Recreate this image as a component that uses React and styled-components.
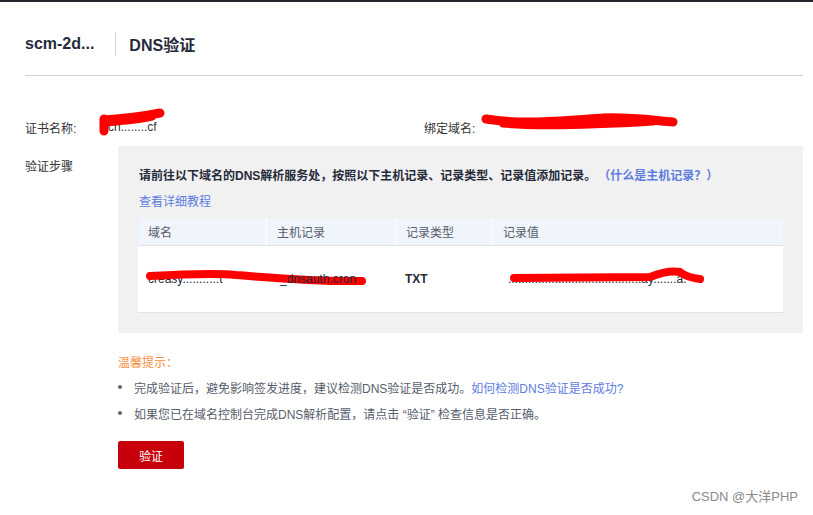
import React from 'react'
import styled, { createGlobalStyle } from 'styled-components'

const GlobalStyle = createGlobalStyle`
  html, body {
    margin: 0;
    padding: 0;
    background: #fff;
  }
  body {
    font-family: "Liberation Sans", "Noto Sans CJK SC", Arial, sans-serif;
    font-size: 12px;
    color: #575d6c;
  }
`;

const Page = styled.div`
  position: relative;
  width: 813px;
  height: 515px;
  border-top: 2px solid #24272e;
  box-sizing: border-box;
  padding: 0 10px 0 25px;
  overflow: hidden;
`;

const Header = styled.div`
  display: flex;
  align-items: center;
  height: 74px;
  border-bottom: 1px solid #cfcfcf;
  box-sizing: border-box;
  padding-top: 10px;
`;

const Title = styled.div`
  font-size: 16px;
  font-weight: bold;
  color: #252b3a;
`;

const Divider = styled.div`
  width: 1px;
  height: 24px;
  background: #d4d4d4;
  margin: 0 13px 0 21px;
`;

const InfoRow = styled.div`
  display: flex;
  align-items: center;
  margin-top: 39px;
  height: 24px;
`;

const Field = styled.div`
  display: flex;
  align-items: center;
  width: ${p => p.$w ? p.$w + 'px' : 'auto'};
`;

const Label = styled.div`
  width: ${p => p.$w}px;
  flex-shrink: 0;
  color: #333;
`;

const Redacted = styled.div`
  position: relative;
  width: ${p => p.$w}px;
  height: 20px;
  color: #333;
  line-height: 20px;
`;

const Scribble = styled.svg`
  position: absolute;
  left: ${p => p.$x || 0}px;
  top: ${p => p.$y || 0}px;
  overflow: visible;
`;

const StepRow = styled.div`
  display: flex;
  margin-top: 7px;
`;

const StepLabel = styled(Label)`
  padding-top: 11px;
`;

const StepBox = styled.div`
  flex: 1;
  background: #f1f1f1;
  padding: 22px 20px 20px 20px;
`;

const Instruction = styled.div`
  font-weight: bold;
  color: #252b3a;
  line-height: 16px;
  padding-left: 1px;
`;

const Link = styled.a`
  color: #5e7ce0;
  text-decoration: none;
  cursor: pointer;
  font-weight: ${p => p.$bold ? 'bold' : 'normal'};
  margin-left: ${p => p.$gap || 0}px;
`;

const Tutorial = styled.div`
  margin-top: 10px;
  line-height: 16px;
  padding-left: 1px;
`;

const Table = styled.div`
  margin-top: 8px;
  background: #fff;
  border-bottom: 1px solid #dfe1e6;
`;

const Cols = styled.div`
  display: grid;
  grid-template-columns: 128px 129px 97px 1fr;
  height: ${p => p.$h}px;
  align-items: center;
  background: ${p => p.$head ? '#f0f4fb' : '#fff'};
  border-bottom: ${p => p.$head ? '1px solid #dfe1e6' : 'none'};
`;

const Cell = styled.div`
  position: relative;
  padding-left: 10px;
  height: 100%;
  display: flex;
  align-items: center;
  color: ${p => p.$head ? '#575d6c' : '#252b3a'};
  font-weight: ${p => p.$strong ? 'bold' : 'normal'};
  border-left: ${p => p.$head && p.$sep ? '1px solid #fff' : 'none'};
`;

const TipTitle = styled.div`
  margin-top: 22px;
  margin-left: 93px;
  color: #f7913d;
  line-height: 16px;
`;

const TipList = styled.ul`
  list-style: none;
  margin: 3px 0 0 93px;
  padding: 0;
`;

const TipItem = styled.li`
  display: flex;
  align-items: center;
  height: 26px;
  color: #575d6c;
  &::before {
    content: '';
    width: 4px;
    height: 4px;
    border-radius: 50%;
    background: #666;
    margin-right: 12px;
  }
`;

const Button = styled.button`
  display: block;
  margin: 15px 0 0 93px;
  width: 66px;
  height: 28px;
  border: none;
  border-radius: 2px;
  background: #c7000b;
  color: #fff;
  font-family: "Liberation Sans", "Noto Sans CJK SC", sans-serif;
  font-size: 12px;
  cursor: pointer;
`;

const Watermark = styled.div`
  position: absolute;
  right: 15px;
  bottom: 10px;
  font-size: 13px;
  color: #8a8a8a;
  font-family: "Liberation Sans", "Noto Sans CJK SC", sans-serif;
`;

const Red = ({ d, w = 8 }) => (
  <path d={d} stroke="#ff0000" strokeWidth={w} strokeLinecap="round" strokeLinejoin="round" fill="none" />
);

export default function App() {
  return (
    <>
      <GlobalStyle />
      <Page>
        <Header>
          <Title>scm-2d...</Title>
          <Divider />
          <Title>DNS验证</Title>
        </Header>

        <InfoRow>
          <Field $w={399}>
            <Label $w={75}>证书名称:</Label>
            <Redacted $w={80}>
              <span style={{ marginLeft: 8 }}>cn........cf</span>
              <Scribble $x={0} $y={-6} width="66" height="26">
                <Red d="M4 8 L4 20 M4 9 C20 8 40 6 60 2" w={9} />
                <Red d="M6 12 C25 10 40 9 52 6" w={7} />
              </Scribble>
            </Redacted>
          </Field>
          <Field>
            <Label $w={59}>绑定域名:</Label>
            <Redacted $w={200}>
              <Scribble $x={0} $y={-2} width="195" height="16">
                <Red d="M3 4 C40 10 80 6 120 3 C150 2 175 6 190 7" w={9} />
                <Red d="M20 9 C60 13 120 10 170 7" w={7} />
              </Scribble>
            </Redacted>
          </Field>
        </InfoRow>

        <StepRow>
          <StepLabel $w={93}>验证步骤</StepLabel>
          <StepBox>
            <Instruction>
              请前往以下域名的DNS解析服务处，按照以下主机记录、记录类型、记录值添加记录。
              <Link $bold $gap={8}>（什么是主机记录？）</Link>
            </Instruction>
            <Tutorial>
              <Link>查看详细教程</Link>
            </Tutorial>
            <Table>
              <Cols $head $h={27}>
                <Cell $head>域名</Cell>
                <Cell $head $sep>主机记录</Cell>
                <Cell $head $sep>记录类型</Cell>
                <Cell $head $sep>记录值</Cell>
              </Cols>
              <Cols $h={66}>
                <Cell>
                  <span>creasy...........t</span>
                  <Scribble $x={8} $y={26} width="220" height="20">
                    <Red d="M4 4 C40 2 70 1 90 3 C130 6 170 10 216 9" w={8} />
                  </Scribble>
                </Cell>
                <Cell>
                  <span style={{ marginLeft: 4 }}>_dnsauth.cron</span>
                </Cell>
                <Cell $strong>TXT</Cell>
                <Cell>
                  <span style={{ marginLeft: 6 }}>........................................ay.......a.</span>
                  <Scribble $x={18} $y={22} width="200" height="20">
                    <Red d="M4 10 C60 10 110 9 140 9 C150 5 160 2 170 4 C175 8 180 10 190 11" w={8} />
                  </Scribble>
                </Cell>
              </Cols>
            </Table>
          </StepBox>
        </StepRow>

        <TipTitle>温馨提示：</TipTitle>
        <TipList>
          <TipItem>
            完成验证后，避免影响签发进度，建议检测DNS验证是否成功。<Link>如何检测DNS验证是否成功?</Link>
          </TipItem>
          <TipItem>如果您已在域名控制台完成DNS解析配置，请点击 “验证” 检查信息是否正确。</TipItem>
        </TipList>
        <Button>验证</Button>

        <Watermark>CSDN @大洋PHP</Watermark>
      </Page>
    </>
  )
}
